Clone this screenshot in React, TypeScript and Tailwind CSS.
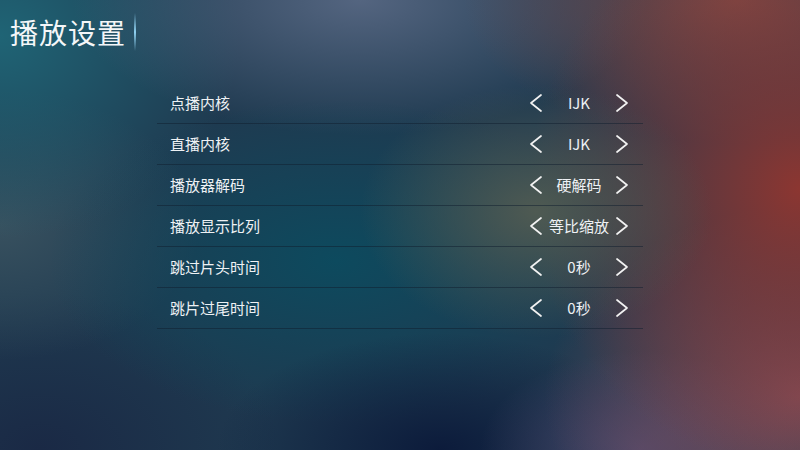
import React from 'react';

type Row = { label: string; value: string };

const rows: Row[] = [
  { label: '点播内核', value: 'IJK' },
  { label: '直播内核', value: 'IJK' },
  { label: '播放器解码', value: '硬解码' },
  { label: '播放显示比列', value: '等比缩放' },
  { label: '跳过片头时间', value: '0秒' },
  { label: '跳片过尾时间', value: '0秒' },
];

const Chevron = ({ dir }: { dir: 'left' | 'right' }) => (
  <svg width="14" height="20" viewBox="0 0 14 20" fill="none" className="shrink-0">
    <polyline
      points={dir === 'left' ? '12,2 2,10 12,18' : '2,2 12,10 2,18'}
      stroke="#f2f2f2"
      strokeWidth="1.7"
      strokeLinecap="round"
      strokeLinejoin="round"
    />
  </svg>
);

export default function App() {
  return (
    <div
      className="w-[800px] h-[450px] overflow-hidden text-white bg-[#1f3a50] bg-[radial-gradient(ellipse_22%_28%_at_67%_47%,#4f5a52_0%,transparent_100%),radial-gradient(ellipse_34%_62%_at_100%_42%,#8c3631_0%,transparent_100%),radial-gradient(ellipse_34%_32%_at_92%_0%,#7a4846_0%,transparent_100%),radial-gradient(ellipse_32%_42%_at_100%_88%,#7e4c58_0%,transparent_100%),radial-gradient(ellipse_20%_22%_at_80%_100%,#4a486b_0%,transparent_100%),radial-gradient(ellipse_28%_26%_at_55%_100%,#0c1b3b_0%,transparent_100%),radial-gradient(ellipse_36%_36%_at_42%_58%,#0d4a5e_0%,transparent_100%),radial-gradient(ellipse_36%_30%_at_45%_0%,#546580_0%,transparent_100%),radial-gradient(ellipse_30%_45%_at_0%_8%,#1f6475_0%,transparent_100%),radial-gradient(ellipse_25%_30%_at_0%_50%,#38515f_0%,transparent_100%),radial-gradient(ellipse_30%_35%_at_5%_100%,#1a2945_0%,transparent_100%)]"
      style={{ fontFamily: '"Noto Sans CJK SC", "Noto Sans", sans-serif' }}
    >
      <header className="h-[64px] flex items-center pl-[10px]">
        <h1 className="text-[28px] leading-none tracking-[1px] text-[#f4f6f8]">播放设置</h1>
        <div className="ml-[8px] w-[2px] h-[38px] bg-gradient-to-b from-transparent via-[#8fd0f0] to-transparent" />
      </header>

      <ul className="ml-[157px] mt-[19px] w-[486px]">
        {rows.map((row) => (
          <li
            key={row.label}
            className="h-[41px] flex items-center justify-between pl-[13px] pr-[14px] border-b border-[#0f1e2e]/50"
          >
            <span className="text-[15px] text-[#eef1f4]">{row.label}</span>
            <div className="w-[100px] flex items-center justify-between">
              <Chevron dir="left" />
              <span className="text-[15px] text-[#eef1f4]">{row.value}</span>
              <Chevron dir="right" />
            </div>
          </li>
        ))}
      </ul>
    </div>
  );
}
